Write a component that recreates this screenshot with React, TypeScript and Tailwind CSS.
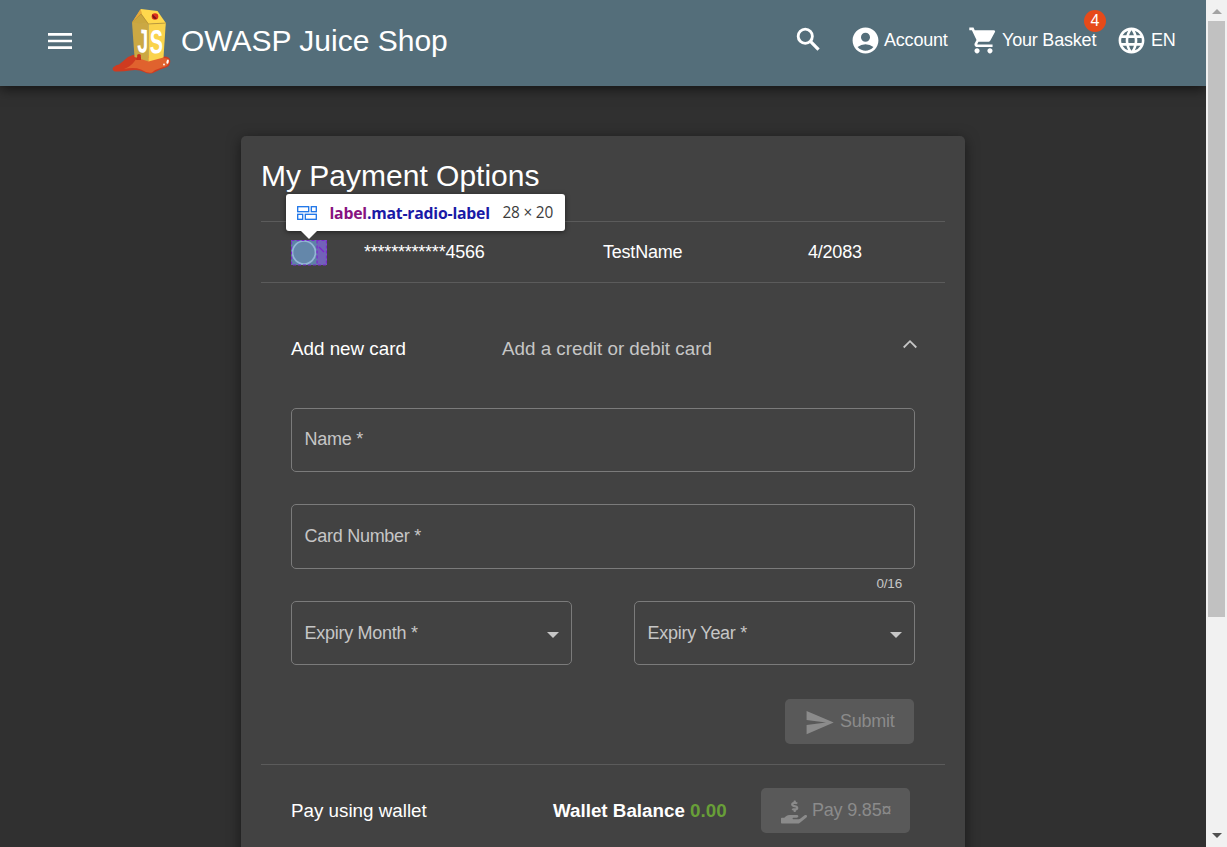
import React from "react";
import {
  MdAccountCircle,
  MdLanguage,
  MdMenu,
  MdSend,
  MdShoppingCart,
} from "react-icons/md";
import { FaHandHoldingUsd } from "react-icons/fa";

function Logo() {
  return (
    <svg viewBox="0 0 64 72" className="h-[72px] w-[64px] shrink-0">
      <path d="M2.500 63 Q3 60 9 58.500 L18 51 Q25 47 34 49 L53 50.500 Q60 50 60.300 55 Q60.300 60 56 61.500 Q50 63 45 66 Q40 69 34 66 Q28 63 20 64.500 Q14 65.500 8 65.500 Q3 66 2.500 63Z" fill="#cf3b20" />
      <path d="M14 63 Q20 61 24 56 Q27 51 33 52 L53 52 Q59.500 52 59.300 56 Q58 60.500 52 61.500 Q46 63 42 66.500 Q37 67.500 31 63.500 Q24 61 14 63Z" fill="#e0622e" />
      <path d="M31 3 L47.500 5 L55.800 17 L38.500 18 L22 17Z" fill="#ffd84d" />
      <path d="M31 7 L38.500 18 L22 17Z" fill="#c9a63e" />
      <path d="M30.500 3 L32 7.500 L24 15 L22 16.500Z" fill="#e6a93a" />
      <path d="M22 16.500 L38.500 18 L38.500 55.500 L24.500 51Z" fill="#cba843" />
      <path d="M38.500 18 L55.800 17 L53.500 51.500 L38.500 55.500Z" fill="#fad34c" />
      <path d="M22 16.500 L31 8 L38.500 18 L55.800 17" fill="none" stroke="#b08b32" strokeWidth=".7" />
      <circle cx="45" cy="10.500" r="3.300" fill="#d9301e" />
      <path d="M42.500 8.300 L47 12.600 A3.300 3.300 0 0 1 42.500 8.300" fill="#7c1712" />
      <circle cx="29" cy="50" r="2" fill="#c9311d" />
      <path d="M27 51 h4 v3 h-5z" fill="#c9311d" />
      <text transform="translate(27.300 46) skewY(4) scale(.6 1)" fontFamily="Liberation Sans" fontWeight="700" fontSize="33" fill="#fff">J</text>
      <text transform="translate(39.800 47.500) skewY(-3) scale(.6 1)" fontFamily="Liberation Sans" fontWeight="700" fontSize="33" fill="#fff">S</text>
      <ellipse cx="57.500" cy="55.500" rx="1.100" ry="2.200" fill="#fff" transform="rotate(15 57 56)" />
      <circle cx="54" cy="58.500" r=".9" fill="#fff" />
    </svg>
  );
}

function SearchIcon() {
  return (
    <svg viewBox="0 0 24 24" className="mt-[24px] ml-[332px] size-[31px] shrink-0" fill="none" stroke="#fff">
      <circle cx="9.500" cy="9.500" r="5.500" strokeWidth="2.200" />
      <path d="M13.700 13.700 19.800 19.800" strokeWidth="2.500" />
    </svg>
  );
}

function Header() {
  return (
    <header className="relative flex h-[86px] shrink-0 items-start bg-[#546e7a] shadow-[0_3px_12px_rgba(0,0,0,0.6)]">
      <MdMenu className="mt-[25px] ml-[44px] size-8 shrink-0" />
      <div className="mt-[6px] ml-[34px]"><Logo /></div>
      <h1 className="mt-[23px] ml-[7px] w-[280px] shrink-0 text-[30px] leading-[36px]">OWASP Juice Shop</h1>
      <SearchIcon />
      <div className="mt-[25px] ml-[26px] flex w-[99px] shrink-0 items-center gap-[3px]">
        <MdAccountCircle className="size-[31px] shrink-0" />
        <span className="text-[18px] leading-[27px] tracking-[-0.2px]">Account</span>
      </div>
      <div className="relative mt-[25px] ml-[19px] flex w-[128px] shrink-0 items-center gap-[3px]">
        <MdShoppingCart className="size-[31px] shrink-0" />
        <span className="text-[18px] leading-[27px] tracking-[-0.2px]">Your Basket</span>
        <span className="absolute top-[-15px] right-[-10px] flex size-[22px] items-center justify-center rounded-full bg-[#e64a19] text-[16px]">4</span>
      </div>
      <div className="mt-[25px] ml-[20px] flex items-center gap-[4px]">
        <MdLanguage className="size-[31px] shrink-0" />
        <span className="text-[18px] leading-[27px] tracking-[-0.2px]">EN</span>
      </div>
    </header>
  );
}

function InspectTip() {
  return (
    <div className="absolute top-[-28px] left-[25px] flex h-[37px] w-[279px] items-center rounded-[3px] bg-white pl-[11px] font-['Open_Sans',sans-serif] text-[15.800px] shadow-[0_1px_5px_rgba(0,0,0,0.5)]">
      <svg viewBox="0 0 20 14" className="h-[14px] w-[20px] shrink-0" fill="none" stroke="#1a73e8" strokeWidth="1.300">
        <rect x=".7" y=".7" width="11" height="5" />
        <rect x="14.300" y=".7" width="5" height="5" />
        <rect x=".7" y="8.300" width="5" height="5" />
        <rect x="8.300" y="8.300" width="11" height="5" />
      </svg>
      <span className="ml-[12.500px] w-[160px] font-bold text-[#1a1aa6]"><span className="text-[#881280]">label</span>.mat-radio-label</span>
      <span className="ml-[13px] text-[15.400px] text-[#3c3c3c]">28 × 20</span>
      <svg viewBox="0 0 18 9" className="absolute top-[36px] left-[14px] h-[9px] w-[18px]"><path d="M0 0h18L9 9z" fill="#fff" /></svg>
    </div>
  );
}

function RadioHighlight() {
  return (
    <svg viewBox="0 0 36 26" className="h-[26px] w-[36px]">
      <rect width="26" height="25" fill="#5e82a7" />
      <rect x="26" width="10" height="25" fill="#7262b9" />
      <circle cx="13" cy="12.500" r="11.500" fill="#6487aa" stroke="#94b5d6" strokeWidth="1.700" />
      <path d="M.5 .5H35.500V25H.5ZM26 .5V25" fill="none" stroke="#7d26cd" strokeWidth="1.200" strokeDasharray="3 2" />
      <path d="M28 7l5 5" stroke="#7d26cd" strokeWidth="1.200" />
    </svg>
  );
}

function Field({ label, className, labelClass = "mt-[19px]", select }: { label: string; className: string; labelClass?: string; select?: boolean }) {
  return (
    <div className={`flex justify-between rounded-[5px] border border-[#7b7b7b] pl-[12.500px] ${className}`}>
      <span className={`text-[18px] leading-[22px] tracking-[-0.270px] text-[#c6c6c6] ${labelClass}`}>{label}</span>
      {select && <svg viewBox="0 0 12 6" className="mt-[30px] mr-[12px] h-[6px] w-[12px]"><path d="M0 0h12L6 6z" fill="#c6c6c6" /></svg>}
    </div>
  );
}

function Scrollbar() {
  return (
    <div className="flex h-full w-[21px] shrink-0 flex-col items-center bg-[#f1f1f1]">
      <svg viewBox="0 0 10 5" className="mt-[9px] h-[5px] w-[10px] shrink-0"><path d="M5 0l5 5H0z" fill="#a3a3a3" /></svg>
      <div className="mt-[7px] h-[596px] w-[17px] shrink-0 bg-[#c1c1c1]" />
      <svg viewBox="0 0 10 5" className="mt-auto mb-[9px] h-[5px] w-[10px] shrink-0"><path d="M5 5l5-5H0z" fill="#505050" /></svg>
    </div>
  );
}

export default function App() {
  return (
    <div className="flex h-[847px] w-[1227px] overflow-hidden bg-[#303030] font-['Liberation_Sans',Arial,sans-serif] whitespace-nowrap text-white">
      <div className="flex h-full w-[1206px] shrink-0 flex-col overflow-hidden">
        <Header />
        <main className="mt-[50px] ml-[241px] h-[760px] w-[724px] shrink-0 rounded-[5px] bg-[#424242] px-[20px] shadow-[0_3px_14px_rgba(0,0,0,0.5)]">
          <h2 className="h-[85px] pt-[22px] text-[30px] leading-[36px]">My Payment Options</h2>
          <section className="relative flex h-[62px] border-y border-[#5b5b5b] text-[18px] leading-[22px] tracking-[-0.220px]">
            <div className="mt-[18px] ml-[30px] w-[73px]"><RadioHighlight /></div>
            <div className="mt-[19px] w-[239px]">************4566</div>
            <div className="mt-[19px] w-[205px]">TestName</div>
            <div className="mt-[19px]">4/2083</div>
            <InspectTip />
          </section>
          <section className="h-[481px] px-[30px]">
            <div className="flex h-[125px] pt-[55px] text-[18.800px] leading-[22px]">
              <span className="w-[211px]">Add new card</span>
              <span className="flex-1 text-[#c6c6c6]">Add a credit or debit card</span>
              <svg viewBox="0 0 16 10" className="mt-[1px] mr-[-3px] h-[10px] w-[16px]" fill="none" stroke="#c6c6c6" strokeWidth="1.800"><path d="M1.700 8.500 8 2.200l6.300 6.300" /></svg>
            </div>
            <Field label="Name *" className="h-[64px]" />
            <Field label="Card Number *" className="mt-[32px] h-[65px]" labelClass="mt-[20px]" />
            <div className="h-[32px] pt-[6px] pr-[13px] text-right text-[13.500px] leading-[17px] tracking-[-0.200px] text-[#c6c6c6]">0/16</div>
            <div className="flex justify-between">
              <Field label="Expiry Month *" className="h-[64px] w-[281px]" labelClass="mt-[20px]" select />
              <Field label="Expiry Year *" className="h-[64px] w-[281px]" labelClass="mt-[20px]" select />
            </div>
            <button className="mt-[34px] mr-[1px] ml-auto flex h-[45px] w-[129px] rounded-[5px] bg-[#595959] pt-[8px] pl-[19px] text-[18px] text-[#8b8b8b]">
              <MdSend className="size-[31px] shrink-0" />
              <span className="mt-[1px] ml-[5px] leading-[27px] tracking-[-0.250px]">Submit</span>
            </button>
          </section>
          <section className="flex border-t border-[#5b5b5b] pl-[30px]">
            <span className="mt-[35px] w-[262px] text-[18.800px] leading-[22px]">Pay using wallet</span>
            <span className="mt-[35px] w-[208px] text-[18.800px] leading-[22px] font-bold">Wallet Balance <span className="text-[#689f38]">0.00</span></span>
            <button className="mt-[23px] flex h-[45px] w-[149px] shrink-0 rounded-[5px] bg-[#595959] pt-[8px] pl-[20px] text-[18px] text-[#8b8b8b]">
              <FaHandHoldingUsd className="mt-[3px] size-[26px] shrink-0" />
              <span className="mt-[1px] ml-[5px] leading-[27px] tracking-[-0.200px]">Pay 9.85¤</span>
            </button>
          </section>
        </main>
      </div>
      <Scrollbar />
    </div>
  );
}
